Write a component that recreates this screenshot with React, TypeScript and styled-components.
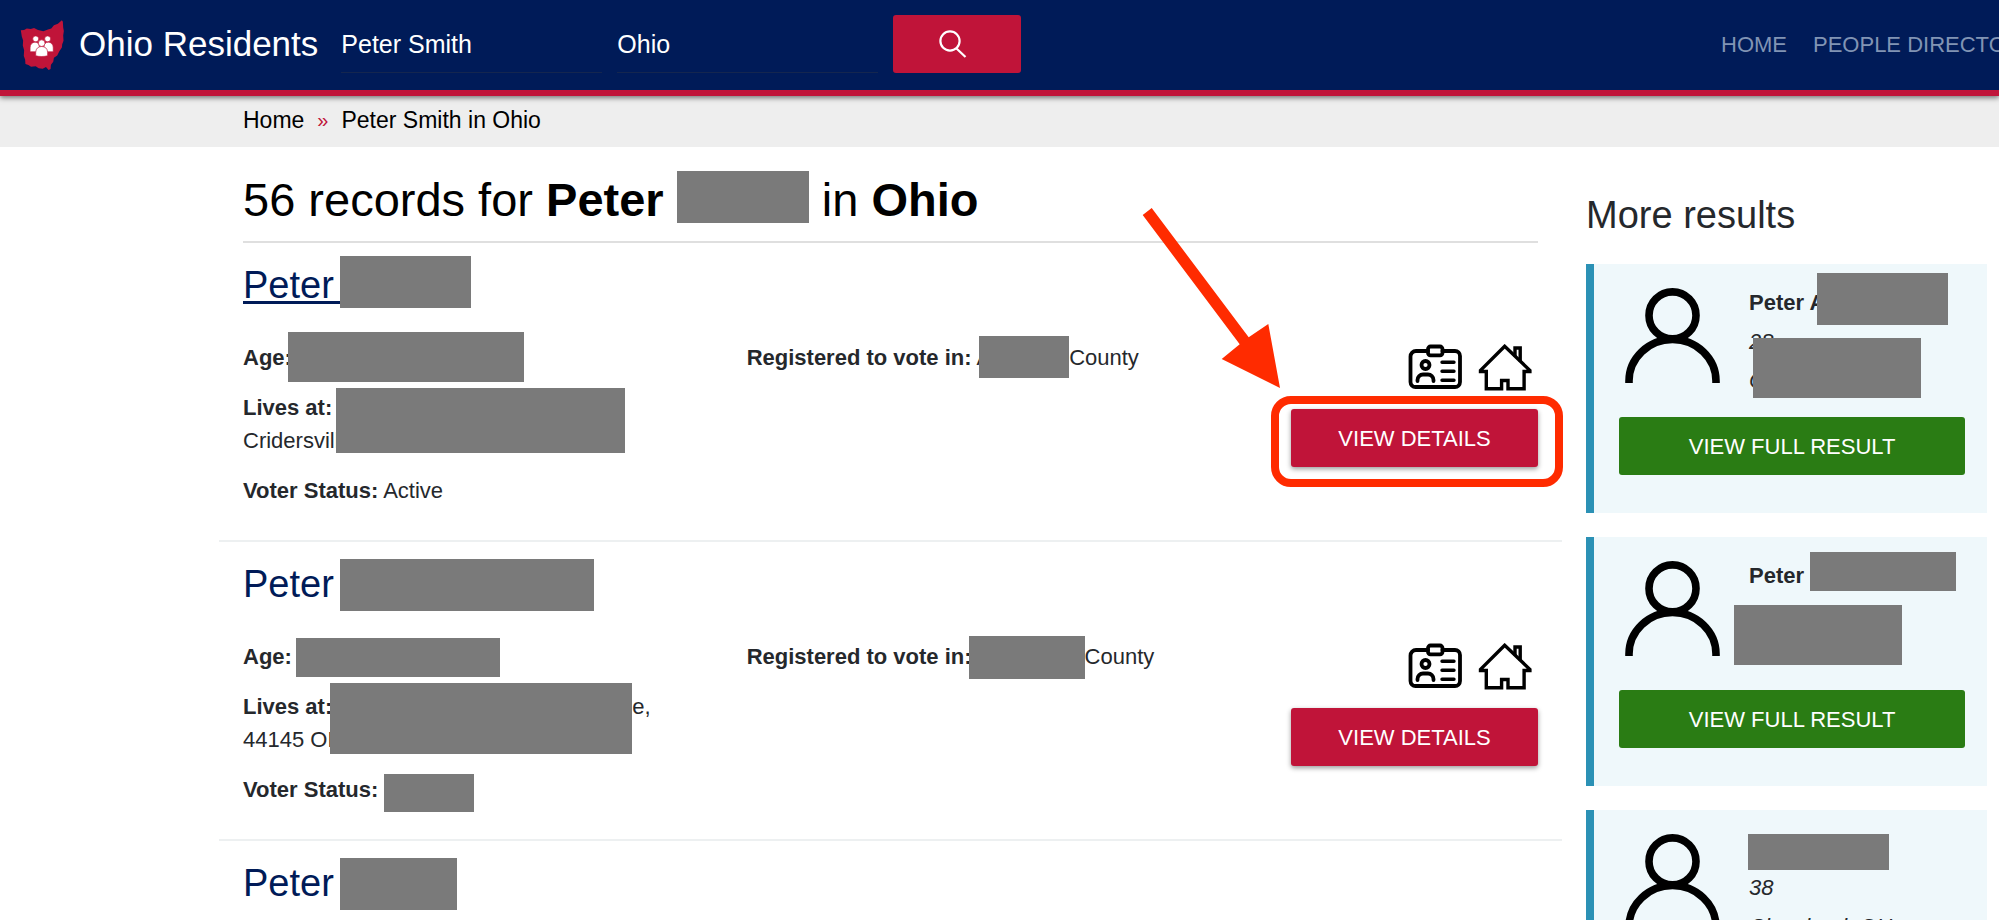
import React from "react";
import styled, { createGlobalStyle, css } from "styled-components";

const navy = "#001b58";
const crimson = "#c01439";
const marker = "#ff2b00";
const ink = "#25282c";

const GlobalStyle = createGlobalStyle`
  *, *::before, *::after { box-sizing: border-box; }
  body {
    margin: 0;
    background: #fff;
    color: ${ink};
    font-family: "Liberation Sans", Arial, Helvetica, sans-serif;
    font-size: 22px;
    line-height: 33px;
  }
  a { color: inherit; text-decoration: none; }
  button, input { font: inherit; }
`;

const Page = styled.div`
  height: 100vh;
  overflow: hidden;
`;

/* Header */

const Header = styled.header`
  position: relative;
  display: flex;
  align-items: center;
  height: 96px;
  padding-left: 20px;
  background: ${navy};
  border-bottom: 6px solid ${crimson};
  box-shadow: 0 2px 5px rgba(0, 0, 0, 0.5);
`;

const Brand = styled.a`
  display: flex;
  flex: none;
  align-items: center;
  gap: 15px;
  color: #fff;
  font-size: 35px;
  line-height: 44px;
  white-space: nowrap;
`;

const BrandName = styled.span`
  padding-bottom: 2px;
`;

const SearchForm = styled.form`
  display: flex;
  flex: 1;
  gap: 15px;
  margin: 0 0 2px 23px;
`;

const SearchField = styled.input`
  width: 261px;
  height: 58px;
  padding: 2px 0 0;
  color: #fff;
  font-size: 25px;
  background: transparent;
  border: 0;
  border-bottom: 1px solid #14264f;
  border-radius: 0;
  outline: 0;
`;

const SearchButton = styled.button`
  display: flex;
  align-items: center;
  justify-content: center;
  width: 128px;
  height: 58px;
  padding: 0 8px 0 0;
  background: ${crimson};
  border: 0;
  border-radius: 3px;
  cursor: pointer;
`;

const Nav = styled.nav`
  display: flex;
  flex: 0 0 278px;
  gap: 26px;
  padding-bottom: 2px;
  overflow: hidden;
  color: #8194b4;
  white-space: nowrap;
`;

/* Breadcrumb */

const Breadcrumb = styled.nav`
  display: flex;
  gap: 13px;
  padding: 9px 243px 12px;
  color: #000;
  font-size: 23px;
  line-height: 30px;
  background: #eee;
`;

const Separator = styled.span`
  color: ${crimson};
  font-size: 20px;
`;

/* Page body */

const Body = styled.div`
  display: grid;
  grid-template-columns: minmax(0, 67fr) minmax(0, 20fr);
  gap: 24px;
  padding: 0 12px 0 219px;
`;

const Heading = styled.h1`
  margin: 25px 24px 0;
  padding-bottom: 13px;
  color: #000;
  font-size: 47px;
  font-weight: 400;
  line-height: 56px;
  white-space: nowrap;
  border-bottom: 2px solid #dfdfdf;
`;

/* Grey block over private details; it hangs from the text baseline and adds no line height. */
const Redacted = styled.span<{ $w: number; $h: number; $up: number; $back?: number }>`
  position: relative;
  display: inline-block;
  width: ${(p) => p.$w}px;
  height: 0;
  margin-left: ${(p) => -(p.$back ?? 0)}px;

  &::after {
    content: "";
    position: absolute;
    top: ${(p) => -p.$up}px;
    left: 0;
    width: 100%;
    height: ${(p) => p.$h}px;
    background: #7a7a7a;
  }
`;

const Record = styled.article`
  padding: 19px 24px 33px;
  border-bottom: 2px solid #edf0f1;
`;

const RecordName = styled.h2`
  margin: 0 0 33px;
  color: ${navy};
  font-size: 38px;
  font-weight: 400;
  line-height: 46px;
`;

const NameLink = styled.a<{ $active?: boolean }>`
  ${(p) =>
    p.$active &&
    css`
      text-decoration: underline;
      text-decoration-thickness: 3px;
      text-decoration-skip-ink: none;
      text-underline-offset: 3px;
    `}
`;

const RecordGrid = styled.div`
  display: grid;
  grid-template-columns: 7fr 7fr 4fr;
`;

const Facts = styled.div`
  display: flex;
  flex-direction: column;
  gap: 17px;
  white-space: nowrap;
`;

const Fact = styled.p`
  margin: 0;
`;

const Actions = styled.div`
  display: flex;
  flex-direction: column;
  align-items: flex-end;
  gap: 18px;
  padding-top: 3px;
`;

const Badges = styled.div`
  display: flex;
  gap: 16px;
  padding-right: 6px;
`;

const Callout = styled.div`
  position: relative;
`;

const ActionButton = styled.button<{ $tone: "details" | "full" }>`
  display: block;
  width: ${(p) => (p.$tone === "full" ? "100%" : "247px")};
  height: 58px;
  padding: 0;
  color: #fff;
  background: ${(p) => (p.$tone === "full" ? "#2a7c14" : crimson)};
  border: 0;
  border-radius: 3px;
  box-shadow: ${(p) => (p.$tone === "full" ? "none" : "0 2px 5px rgba(0, 0, 0, 0.4)")};
  cursor: pointer;
`;

const HighlightFrame = styled.span`
  position: absolute;
  inset: -13px -25px -20px -20px;
  border: 8px solid ${marker};
  border-radius: 20px;
  pointer-events: none;
`;

const ArrowMark = styled.svg`
  position: absolute;
  top: -201px;
  left: -149px;
  pointer-events: none;
`;

/* Sidebar */

const SidebarTitle = styled.h2`
  margin: 45px 0 26px;
  font-size: 38px;
  font-weight: 400;
  line-height: 46px;
  white-space: nowrap;
`;

const CardList = styled.div`
  display: flex;
  flex-direction: column;
  gap: 24px;
`;

const Card = styled.section`
  padding: 22px 22px 38px 25px;
  background: #eff8fb;
  border-left: 8px solid #2b91b5;
`;

const Person = styled.div`
  display: flex;
  gap: 29px;
  margin: 0 0 20px 6px;

  svg {
    flex: none;
    margin-top: 2px;
  }
`;

const PersonFacts = styled.div`
  display: flex;
  flex: 1;
  flex-direction: column;
  gap: 6px;
  min-width: 0;
  white-space: nowrap;
`;

/* Drawings */

const OhioLogo = () => (
  <svg width="44" height="50" viewBox="60 57 132 151" aria-hidden="true">
    <path
      fill={crimson}
      d="M62 88l10-1 8-4 12 1 10-3 12 6 16 4 14-5 10-3 8-10 12-5 12-10 3 4 1 18 2 10-2 14 1 16-4 10-1 10-8 12-6 12-10 7-2 12-7 9-1 13-6 3-8-9-10 5-12-1-9-6-14 1-8-5-9-3-1-14-4-10 1-18-4-14 1-15-4-12z"
    />
    <g fill="#fff" stroke={crimson} strokeWidth="2">
      <circle cx="107" cy="114" r="9" />
      <circle cx="143" cy="114" r="9" />
      <path d="M90 153v-12c0-10 6-17 15-17s13 6 13 14l-8 15z" />
      <path d="M160 153v-12c0-10-6-17-15-17s-13 6-13 14l8 15z" />
      <path d="M107 165v-10c0-12 8-18 18-18s18 6 18 18v10c-10 3-26 3-36 0z" />
      <circle cx="125" cy="127" r="10" />
    </g>
  </svg>
);

const SearchIcon = () => (
  <svg width="28" height="28" viewBox="0 0 28 28" fill="none" stroke="#fff" strokeWidth="2.2" aria-hidden="true">
    <circle cx="11" cy="11" r="9.6" />
    <path d="M17.5 18.5l9 8.5" />
  </svg>
);

const IdCardIcon = () => (
  <svg width="54" height="47" viewBox="0 0 54 47" fill="none" stroke="#000" strokeWidth="3.8" strokeLinecap="round" aria-hidden="true">
    <path d="M20 7H8a5.500 5.500 0 0 0-5.500 5.500v25.500a5 5 0 0 0 5 5h39.500a5 5 0 0 0 5-5V12a5 5 0 0 0-5-5H34.500" />
    <rect x="20" y="2.500" width="14.500" height="8.800" rx="2.500" />
    <circle cx="17.500" cy="21" r="4" />
    <path d="M9.500 37v-1a5.500 5.500 0 0 1 5.500-5.500h5a5.500 5.500 0 0 1 5.500 5.500v1" />
    <path d="M34 18.300h12M34 27.300h12M34 36.300h12" strokeWidth="3.400" />
  </svg>
);

const HouseIcon = () => (
  <svg width="54" height="47" viewBox="0 0 54 47" fill="none" stroke="#000" strokeWidth="3.400" aria-hidden="true">
    <path d="M26.700 2.300L2.500 26.400v1.100h5.800v17.200h15.300v-8.200h6.400v8.200h16.100V27.500h5.800v-1.100z" />
    <path d="M37 12.500V4h5.200v13.500" />
  </svg>
);

const PersonIcon = () => (
  <svg width="95" height="95" viewBox="0 0 95 95" fill="none" stroke="#000" strokeWidth="7.600" aria-hidden="true">
    <circle cx="47.500" cy="27.400" r="23.500" />
    <path d="M4 95v-2a43.500 41.500 0 0 1 87 0v2" />
  </svg>
);

const Arrow = () => (
  <ArrowMark width="138" height="180" viewBox="0 0 138 180" aria-hidden="true">
    <path fill={marker} d="M.7 7L9.700 0l97 129.300L126.300 116 138 180l-58.300-29 18-14.700z" />
  </ArrowMark>
);

const DetailActions = ({ highlighted }: { highlighted?: boolean }) => (
  <Actions>
    <Badges>
      <IdCardIcon />
      <HouseIcon />
    </Badges>
    <Callout>
      <ActionButton type="button" $tone="details">VIEW DETAILS</ActionButton>
      {highlighted && (
        <>
          <HighlightFrame />
          <Arrow />
        </>
      )}
    </Callout>
  </Actions>
);

const ResultCard = ({ children }: { children: React.ReactNode }) => (
  <Card>
    <Person>
      <PersonIcon />
      <PersonFacts>{children}</PersonFacts>
    </Person>
    <ActionButton type="button" $tone="full">VIEW FULL RESULT</ActionButton>
  </Card>
);

export default function App() {
  return (
    <Page>
      <GlobalStyle />
      <Header>
        <Brand href="#">
          <OhioLogo />
          <BrandName>Ohio Residents</BrandName>
        </Brand>
        <SearchForm onSubmit={(e) => e.preventDefault()}>
          <SearchField aria-label="Name" defaultValue="Peter Smith" />
          <SearchField aria-label="State" defaultValue="Ohio" />
          <SearchButton type="submit" aria-label="Search">
            <SearchIcon />
          </SearchButton>
        </SearchForm>
        <Nav>
          <a href="#">HOME</a>
          <a href="#">PEOPLE DIRECTORY</a>
        </Nav>
      </Header>
      <Breadcrumb aria-label="Breadcrumb">
        <a href="#">Home</a>
        <Separator>»</Separator>
        <span>Peter Smith in Ohio</span>
      </Breadcrumb>

      <Body>
        <main>
          <Heading>
            56 records for <b>Peter </b>
            <Redacted $w={132} $h={52} $up={45} /> in <b>Ohio</b>
          </Heading>

          <Record>
            <RecordName>
              <NameLink href="#" $active>
                Peter <Redacted $w={131} $h={52} $up={42} $back={4} />
              </NameLink>
            </RecordName>
            <RecordGrid>
              <Facts>
                <Fact>
                  <b>Age:</b>
                  <Redacted $w={236} $h={50} $up={33} $back={4} />
                </Fact>
                <Fact>
                  <b>Lives at:</b> <Redacted $w={289} $h={65} $up={27} $back={2} />
                  <br />
                  Cridersville
                </Fact>
                <Fact>
                  <b>Voter Status:</b> Active
                </Fact>
              </Facts>
              <Facts>
                <Fact>
                  <b>Registered to vote in:</b> A<Redacted $w={90} $h={42} $up={29} $back={12} />
                  County
                </Fact>
              </Facts>
              <DetailActions highlighted />
            </RecordGrid>
          </Record>

          <Record>
            <RecordName>
              <NameLink href="#">
                Peter <Redacted $w={254} $h={52} $up={38} $back={4} />
              </NameLink>
            </RecordName>
            <RecordGrid>
              <Facts>
                <Fact>
                  <b>Age:</b> <Redacted $w={204} $h={39} $up={26} $back={2} />
                </Fact>
                <Fact>
                  <b>Lives at:</b>
                  <Redacted $w={302} $h={71} $up={31} $back={2} />
                  e,
                  <br />
                  44145 OH
                </Fact>
                <Fact>
                  <b>Voter Status:</b> <Redacted $w={90} $h={38} $up={23} />
                </Fact>
              </Facts>
              <Facts>
                <Fact>
                  <b>Registered to vote in:</b>
                  <Redacted $w={116} $h={43} $up={28} $back={3} />
                  County
                </Fact>
              </Facts>
              <DetailActions />
            </RecordGrid>
          </Record>

          <Record>
            <RecordName>
              <NameLink href="#">
                Peter <Redacted $w={117} $h={52} $up={38} $back={4} />
              </NameLink>
            </RecordName>
          </Record>
        </main>

        <aside>
          <SidebarTitle>More results</SidebarTitle>
          <CardList>
            <ResultCard>
              <b>
                Peter A<Redacted $w={131} $h={52} $up={37} $back={8} />
              </b>
              <i>
                28
                <Redacted $w={168} $h={60} $up={11} $back={21} />
              </i>
              <i>C</i>
            </ResultCard>
            <ResultCard>
              <b>
                Peter <Redacted $w={146} $h={39} $up={31} />
              </b>
              <i>
                <Redacted $w={168} $h={60} $up={17} $back={15} />
              </i>
              <i>&nbsp;</i>
            </ResultCard>
            <ResultCard>
              <b>
                <Redacted $w={141} $h={36} $up={22} $back={1} />
              </b>
              <i>38</i>
              <i>Cleveland, OH</i>
            </ResultCard>
          </CardList>
        </aside>
      </Body>
    </Page>
  );
}
